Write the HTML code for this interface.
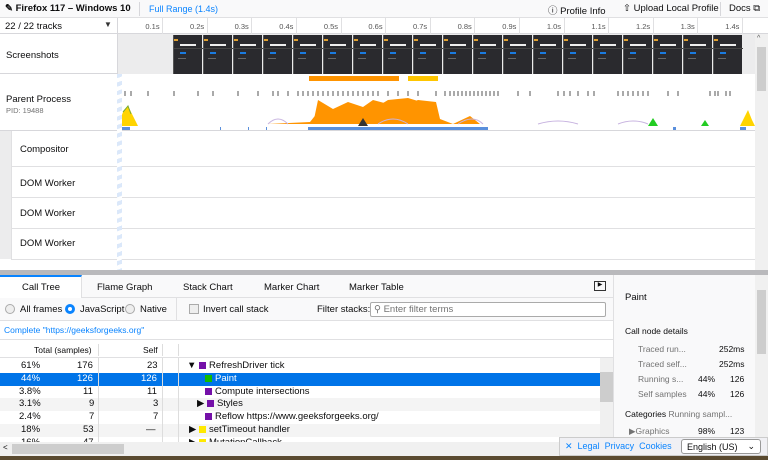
<!DOCTYPE html>
<html><head><meta charset="utf-8"><style>
*{box-sizing:border-box;margin:0;padding:0}
body{width:768px;height:460px;overflow:hidden;background:#fff;font-family:"Liberation Sans",sans-serif;font-size:9.5px;color:#0c0c0d;position:relative}
.a{position:absolute}
.t{white-space:nowrap}
.row{position:absolute;left:0;width:600px;height:12.8px;font-size:9.5px}
.row span{position:absolute;top:0px;white-space:nowrap}
.sq{display:inline-block;width:7px;height:7px;vertical-align:-1px;margin-right:3px}
</style></head><body>
<!-- top bar -->
<div class="a" style="left:0;top:0;width:768px;height:18px;background:#f9f9fa;border-bottom:1px solid #e0e0e2"></div>
<div class="a t" style="left:5px;top:3px;font-weight:bold;font-size:9.5px">✎ Firefox 117 – Windows 10</div>
<div class="a" style="left:139px;top:2px;width:1px;height:14px;background:#d7d7db"></div>
<div class="a t" style="left:149px;top:4px;color:#0a84ff;font-size:9px">Full Range (1.4s)</div>
<div class="a t" style="left:548px;top:3px;font-size:9.5px">ⓘ Profile Info</div>
<div class="a t" style="left:623px;top:3px;font-size:9.5px">⇧ Upload Local Profile</div>
<div class="a" style="left:720px;top:2px;width:1px;height:14px;background:#d7d7db"></div>
<div class="a t" style="left:729px;top:3px;font-size:9.5px">Docs ⧉</div>
<!-- ruler -->
<div class="a" style="left:0;top:18px;width:768px;height:16px;border-bottom:1px solid #d7d7db;background:#fff"></div>
<div class="a t" style="left:5px;top:21px;font-size:9.5px">22 / 22 tracks</div>
<div class="a t" style="left:104px;top:20px;font-size:8px;color:#333">▼</div>
<div class="a" style="left:117px;top:18px;width:1px;height:242px;background:#d7d7db"></div>
<div id="ruler"></div>
<!-- screenshots -->
<div class="a" style="left:0;top:34px;width:117px;height:40px;border-bottom:1px solid #d7d7db"></div>
<div class="a t" style="left:6px;top:50px">Screenshots</div>
<div class="a" style="left:118px;top:34px;width:637px;height:40px;background:#ececed"></div>
<div id="shots"></div>
<!-- parent process -->
<div class="a" style="left:0;top:74px;width:755px;height:57px;border-bottom:1px solid #d7d7db"></div>
<div class="a t" style="left:6px;top:94px">Parent Process</div>
<div class="a t" style="left:6px;top:106px;font-size:7.5px;color:#737373">PID: 19488</div>
<svg class="a" style="left:118px;top:74px" width="637" height="57">
<rect x="191" y="2" width="90" height="5" fill="#ff9400"/>
<rect x="290" y="2" width="30" height="5" fill="#ffc600"/>
<g stroke="#555" stroke-width="1">
<path d="M7 17v5M13 17v5M30 17v5M56 17v5M80 17v5M95 17v5M120 17v5M140 17v5M155 17v5M160 17v5M170 17v5M180 17v5M185 17v5M190 17v5M195 17v5M200 17v5M205 17v5M210 17v5M215 17v5M220 17v5M225 17v5M230 17v5M235 17v5M240 17v5M245 17v5M250 17v5M255 17v5M260 17v5M270 17v5M280 17v5M290 17v5M300 17v5M318 17v5M327 17v5M332 17v5M336 17v5M340 17v5M344 17v5M348 17v5M352 17v5M356 17v5M360 17v5M364 17v5M368 17v5M372 17v5M376 17v5M380 17v5M400 17v5M412 17v5M440 17v5M446 17v5M452 17v5M460 17v5M470 17v5M476 17v5M500 17v5M505 17v5M510 17v5M515 17v5M520 17v5M525 17v5M530 17v5M550 17v5M560 17v5M592 17v5M597 17v5M600 17v5M608 17v5M612 17v5"/>
</g>
<path d="M192 48 L200 38 L215 35 L230 28 L245 33 L255 26 L270 30 L280 38 L290 30 L300 26 L318 28 L322 45 L335 50 L352 42 L362 50 L150 50Z" fill="#ff9400"/>
<path d="M195 50 L200 26 L215 35 L260 32 L270 26 L290 24 L310 30 L322 50Z" fill="#ff9400"/>
<path d="M0 52 L5 38 L10 32 L15 42 L20 52Z" fill="#ffd400"/>
<path d="M5 38 L10 32 L13 40" stroke="#7a3" fill="none"/>
<path d="M622 52 L626 44 L630 36 L634 46 L637 52Z" fill="#ffd400"/>
<path d="M530 52 L535 44 L540 52Z" fill="#2c2"/>
<path d="M583 52 L587 46 L591 52Z" fill="#2c2"/>
<path d="M240 52 L245 44 L250 52Z" fill="#333"/>
<g fill="#5a8fdc"><rect x="2" y="53" width="10" height="3"/><rect x="190" y="53" width="180" height="3"/><rect x="555" y="53" width="3" height="3"/><rect x="640" y="53" width="3" height="3"/><rect x="622" y="53" width="6" height="3"/><rect x="102" y="53" width="1" height="3"/><rect x="130" y="53" width="1" height="3"/><rect x="148" y="53" width="1" height="3"/></g>
<path d="M150 50 Q160 40 170 50 M260 50 Q275 40 290 50 M340 50 Q355 40 365 50 M420 50 Q440 44 460 50 M500 50 Q515 44 530 50" stroke="#c8b4e0" fill="none"/>
</svg>
<!-- thread tracks -->
<div class="a" style="left:0;top:131px;width:11px;height:128px;background:#ececed"></div>
<div class="a" style="left:11px;top:131px;width:744px;height:36px;border-bottom:1px solid #e0e0e2"></div>
<div class="a t" style="left:20px;top:144px">Compositor</div>
<div class="a" style="left:11px;top:167px;width:744px;height:31px;border-bottom:1px solid #e0e0e2"></div>
<div class="a t" style="left:20px;top:178px">DOM Worker</div>
<div class="a" style="left:11px;top:198px;width:744px;height:31px;border-bottom:1px solid #e0e0e2"></div>
<div class="a t" style="left:20px;top:208px">DOM Worker</div>
<div class="a" style="left:11px;top:229px;width:744px;height:31px;border-bottom:1px solid #e0e0e2"></div>
<div class="a t" style="left:20px;top:238px">DOM Worker</div>
<div class="a" style="left:11px;top:131px;width:1px;height:128px;background:#e0e0e2"></div>
<div class="a" style="left:117px;top:74px;width:5px;height:200px;background:repeating-linear-gradient(160deg,#dbe8fa 0 4px,#fff 4px 8px)"></div>
<!-- right scrollbar top -->
<div class="a" style="left:755px;top:34px;width:13px;height:238px;background:#f0f0f0"></div>
<div class="a" style="left:757px;top:47px;width:9px;height:44px;background:#cdcdcd"></div>
<div class="a t" style="left:757px;top:35px;font-size:7px;color:#555">^</div>
<!-- splitter -->
<div class="a" style="left:0;top:270px;width:768px;height:5px;background:#b9b9bc"></div>
<!-- tabs -->
<div class="a" style="left:0;top:275px;width:613px;height:23px;background:#f9f9fa;border-bottom:1px solid #e0e0e2"></div>
<div class="a" style="left:0;top:275px;width:82px;height:24px;background:#fff;border-top:2px solid #0a84ff;border-right:1px solid #e0e0e2"></div>
<div class="a t" style="left:22px;top:282px;font-size:9.5px">Call Tree</div>
<div class="a t" style="left:97px;top:282px;font-size:9.5px">Flame Graph</div>
<div class="a t" style="left:183px;top:282px;font-size:9.5px">Stack Chart</div>
<div class="a t" style="left:264px;top:282px;font-size:9.5px">Marker Chart</div>
<div class="a t" style="left:349px;top:282px;font-size:9.5px">Marker Table</div>
<div class="a" style="left:594px;top:281px;width:12px;height:10px;border:1.5px solid #333;font-size:6px;line-height:7px;text-align:center">▶</div>
<!-- settings -->
<div class="a" style="left:0;top:298px;width:613px;height:23px;border-bottom:1px solid #e0e0e2;background:#f9f9fa"></div>
<div class="a" style="left:5px;top:304px;width:10px;height:10px;border-radius:50%;border:1px solid #aaa;background:#eee"></div>
<div class="a t" style="left:20px;top:304px">All frames</div>
<div class="a" style="left:65px;top:304px;width:10px;height:10px;border-radius:50%;border:3px solid #0a84ff;background:#fff"></div>
<div class="a t" style="left:80px;top:304px">JavaScript</div>
<div class="a" style="left:125px;top:304px;width:10px;height:10px;border-radius:50%;border:1px solid #aaa;background:#eee"></div>
<div class="a t" style="left:140px;top:304px">Native</div>
<div class="a" style="left:176px;top:298px;width:1px;height:23px;background:#e0e0e2"></div>
<div class="a" style="left:189px;top:304px;width:10px;height:10px;border:1px solid #aaa;background:#eee"></div>
<div class="a t" style="left:203px;top:304px">Invert call stack</div>
<div class="a t" style="left:317px;top:304px">Filter stacks:</div>
<div class="a t" style="left:370px;top:302px;width:236px;height:15px;border:1px solid #aaa;border-radius:2px;background:#fff;padding-left:3px;color:#737373;font-size:9.5px;line-height:13px">⚲ Enter filter terms</div>
<!-- breadcrumb -->
<div class="a" style="left:0;top:321px;width:613px;height:19px;border-bottom:1px solid #e0e0e2"></div>
<div class="a t" style="left:4px;top:325px;color:#0a84ff;font-size:8.5px">Complete "https://geeksforgeeks.org"</div>
<!-- tree header -->
<div class="a" style="left:0;top:340px;width:613px;height:18px;border-bottom:1px solid #e0e0e2"></div>
<div class="a t" style="left:34px;top:345px;font-size:8.5px">Total (samples)</div>
<div class="a" style="left:98px;top:344px;width:1px;height:12px;background:#ddd"></div>
<div class="a t" style="left:143px;top:345px;font-size:8.5px">Self</div>
<div class="a" style="left:162px;top:344px;width:1px;height:12px;background:#ddd"></div>
<div class="a" style="left:178px;top:344px;width:1px;height:12px;background:#ddd"></div>
<div class="a" style="left:98px;top:358px;width:1px;height:84px;background:#ddd;z-index:2"></div>
<div class="a" style="left:162px;top:358px;width:1px;height:84px;background:#ddd;z-index:2"></div>
<div class="a" style="left:178px;top:358px;width:1px;height:84px;background:#ddd;z-index:2"></div>
<div class="row" style="top:360px"><span style="left:21px">61%</span><span style="left:77px">176</span><span style="left:147px">23</span><span style="left:187px">▼ <i class="sq" style="background:#7410a8"></i>RefreshDriver tick</span></div>
<div class="row" style="top:372.8px;background:#0074e8;color:#fff"><span style="left:21px">44%</span><span style="left:77px">126</span><span style="left:141px">126</span><span style="left:205px"><i class="sq" style="background:#12bc00"></i>Paint</span></div>
<div class="row" style="top:385.6px"><span style="left:19px">3.8%</span><span style="left:83px">11</span><span style="left:147px">11</span><span style="left:205px"><i class="sq" style="background:#7410a8"></i>Compute intersections</span></div>
<div class="row" style="top:398.4px;background:#f4f4f4"><span style="left:19px">3.1%</span><span style="left:89px">9</span><span style="left:153px">3</span><span style="left:197px">▶ <i class="sq" style="background:#7410a8"></i>Styles</span></div>
<div class="row" style="top:411.2px"><span style="left:19px">2.4%</span><span style="left:89px">7</span><span style="left:153px">7</span><span style="left:205px"><i class="sq" style="background:#7410a8"></i>Reflow https://www.geeksforgeeks.org/</span></div>
<div class="row" style="top:424px;background:#f4f4f4"><span style="left:21px">18%</span><span style="left:83px">53</span><span style="left:146px">—</span><span style="left:189px">▶ <i class="sq" style="background:#ffe900"></i>setTimeout handler</span></div>
<div class="row" style="top:436.8px"><span style="left:21px">16%</span><span style="left:83px">47</span><span style="left:189px">▶ <i class="sq" style="background:#ffe900"></i>MutationCallback</span></div>
<div class="a" style="left:600px;top:358px;width:13px;height:84px;background:#f0f0f0;z-index:3"></div>
<div class="a" style="left:600px;top:372px;width:13px;height:30px;background:#cdcdcd;z-index:3"></div>
<div class="a" style="left:0;top:442px;width:613px;height:14px;background:#f0f0f0;z-index:3"></div>
<div class="a" style="left:12px;top:444px;width:112px;height:10px;background:#cdcdcd;z-index:3"></div>
<div class="a t" style="left:3px;top:443px;font-size:8px;z-index:3">&lt;</div>
<div class="a" style="left:0;top:456px;width:768px;height:4px;background:#5a4a30;z-index:5"></div>
<!-- sidebar -->
<div class="a" style="left:613px;top:275px;width:142px;height:181px;background:#f9f9fa;border-left:1px solid #e0e0e2"></div>
<div class="a t" style="left:625px;top:292px;font-size:9.5px">Paint</div>
<div class="a t" style="left:625px;top:326px;font-size:8.5px">Call node details</div>
<div class="a t" style="left:638px;top:344px;font-size:8.5px;color:#737373">Traced run...</div><div class="a t" style="left:719px;top:344px;font-size:8.5px">252ms</div>
<div class="a t" style="left:638px;top:359px;font-size:8.5px;color:#737373">Traced self...</div><div class="a t" style="left:719px;top:359px;font-size:8.5px">252ms</div>
<div class="a t" style="left:638px;top:374px;font-size:8.5px;color:#737373">Running s...</div><div class="a t" style="left:698px;top:374px;font-size:8.5px">44%</div><div class="a t" style="left:730px;top:374px;font-size:8.5px">126</div>
<div class="a t" style="left:638px;top:389px;font-size:8.5px;color:#737373">Self samples</div><div class="a t" style="left:698px;top:389px;font-size:8.5px">44%</div><div class="a t" style="left:730px;top:389px;font-size:8.5px">126</div>
<div class="a t" style="left:625px;top:409px;font-size:8.5px">Categories <span style="color:#737373">Running sampl...</span></div>
<div class="a t" style="left:629px;top:426px;font-size:8.5px;color:#737373">▶Graphics</div><div class="a t" style="left:698px;top:426px;font-size:8.5px">98%</div><div class="a t" style="left:730px;top:426px;font-size:8.5px">123</div>
<div class="a" style="left:755px;top:275px;width:13px;height:181px;background:#f0f0f0"></div>
<div class="a" style="left:757px;top:290px;width:9px;height:64px;background:#cdcdcd"></div>
<!-- footer -->
<div class="a" style="left:559px;top:437px;width:209px;height:19px;background:#f0f0f4;border:1px solid #ccc;z-index:4"></div>
<div class="a t" style="left:565px;top:441px;font-size:9px;color:#0a84ff;z-index:4">✕ &nbsp;Legal &nbsp;Privacy &nbsp;Cookies</div>
<div class="a t" style="left:681px;top:439px;width:80px;height:15px;border:1px solid #999;border-radius:3px;background:#fff;font-size:9px;padding:2px 0 0 5px;z-index:4">English (US) <span style="position:absolute;right:5px;top:1px">⌄</span></div>
<script>
var r='';for(var i=1;i<=14;i++){var x=117+44.6*i;r+='<div class="a" style="left:'+(x+0.5)+'px;top:18px;width:1px;height:16px;background:#e0e0e2"></div><div class="a t" style="left:'+(x-18)+'px;top:22px;width:16px;text-align:right;font-size:7.5px;color:#555">'+(i/10).toFixed(1)+'s</div>';}
document.getElementById('ruler').innerHTML=r;
var s='';for(var j=0;j<19;j++){var x=173+30*j;s+='<div class="a" style="left:'+x+'px;top:35px;width:29px;height:39px;background:#2a2a2e;border-left:1px solid #555"><div style="position:absolute;left:0;top:4px;width:4px;height:2px;background:#e0a030"></div><div style="position:absolute;left:6px;top:9px;width:16px;height:2px;background:#eee"></div><div style="position:absolute;left:0;top:13px;width:29px;height:1px;background:#444"></div><div style="position:absolute;left:6px;top:17px;width:6px;height:2px;background:#1a7be0"></div><div style="position:absolute;left:4px;top:23px;width:8px;height:1px;background:#666"></div></div>';}
document.getElementById('shots').innerHTML=s;
</script>
</body></html>
